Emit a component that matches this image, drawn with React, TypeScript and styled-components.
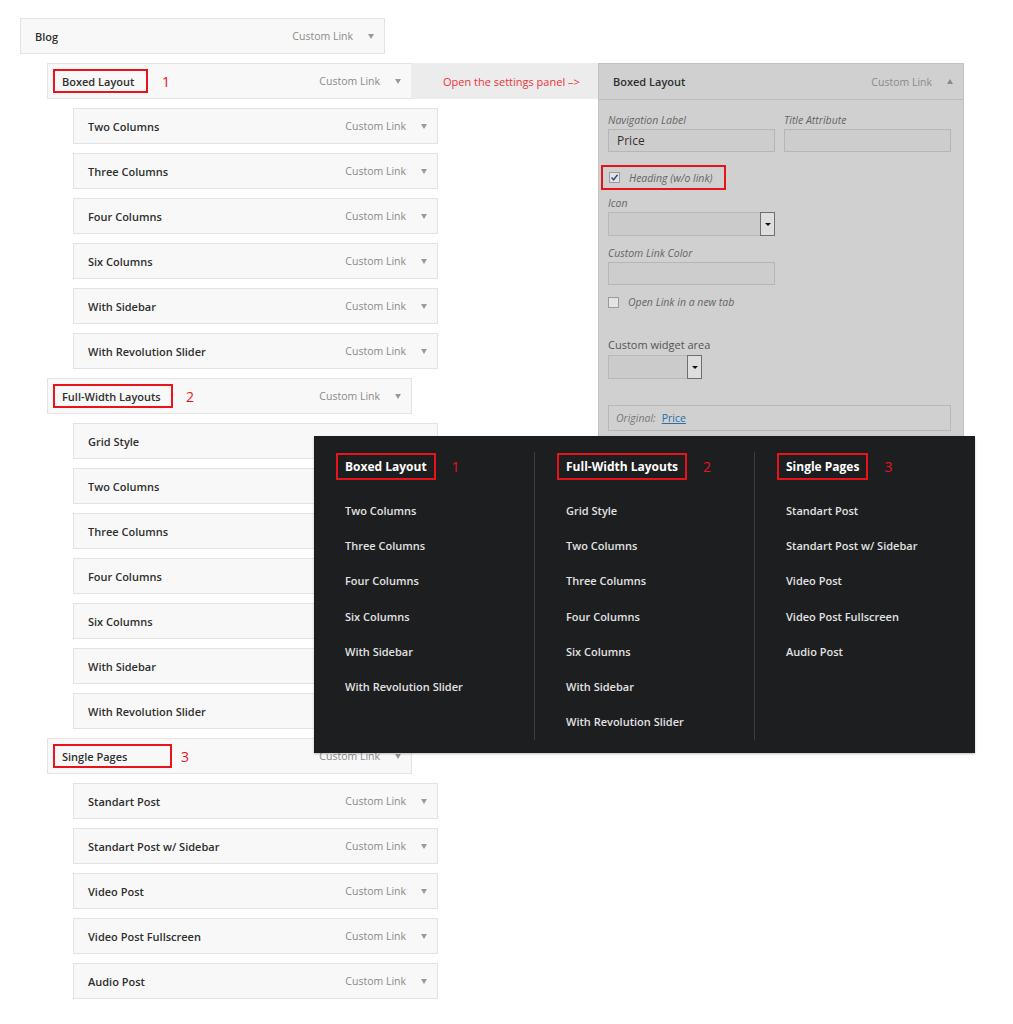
import React from 'react';
import styled, { createGlobalStyle } from 'styled-components';

type Item = {
  level: number;
  title: string;
  mark?: number;
  box?: number;
  markGap?: number;
  covered?: boolean;
};

const items: Item[] = [
  { level: 0, title: 'Blog' },
  { level: 1, title: 'Boxed Layout', mark: 1, box: 95, markGap: 14 },
  { level: 2, title: 'Two Columns' },
  { level: 2, title: 'Three Columns' },
  { level: 2, title: 'Four Columns' },
  { level: 2, title: 'Six Columns' },
  { level: 2, title: 'With Sidebar' },
  { level: 2, title: 'With Revolution Slider' },
  { level: 1, title: 'Full-Width Layouts', mark: 2, box: 120, markGap: 13 },
  { level: 2, title: 'Grid Style', covered: true },
  { level: 2, title: 'Two Columns', covered: true },
  { level: 2, title: 'Three Columns', covered: true },
  { level: 2, title: 'Four Columns', covered: true },
  { level: 2, title: 'Six Columns', covered: true },
  { level: 2, title: 'With Sidebar', covered: true },
  { level: 2, title: 'With Revolution Slider', covered: true },
  { level: 1, title: 'Single Pages', mark: 3, box: 119, markGap: 9 },
  { level: 2, title: 'Standart Post' },
  { level: 2, title: 'Standart Post w/ Sidebar' },
  { level: 2, title: 'Video Post' },
  { level: 2, title: 'Video Post Fullscreen' },
  { level: 2, title: 'Audio Post' },
];

const megaColumns = [
  {
    title: 'Boxed Layout',
    mark: 1,
    links: ['Two Columns', 'Three Columns', 'Four Columns', 'Six Columns', 'With Sidebar', 'With Revolution Slider'],
  },
  {
    title: 'Full-Width Layouts',
    mark: 2,
    links: ['Grid Style', 'Two Columns', 'Three Columns', 'Four Columns', 'Six Columns', 'With Sidebar', 'With Revolution Slider'],
  },
  {
    title: 'Single Pages',
    mark: 3,
    links: ['Standart Post', 'Standart Post w/ Sidebar', 'Video Post', 'Video Post Fullscreen', 'Audio Post'],
  },
];

const indent = [0, 27, 53];

const Check = () => (
  <svg width="9" height="9" viewBox="0 0 9 9">
    <path d="M1.5 4.6 L3.6 6.8 L7.6 1.8" fill="none" stroke="#3a4f8a" strokeWidth="1.5" />
  </svg>
);

const App = () => {
  return (
    <>
      <GlobalStyle />
      <Canvas>
        <MenuList>
          {items.map((item, i) => (
            <Row key={i} $indent={indent[item.level]}>
              {item.mark ? (
                <Marked>
                  <TitleBox $width={item.box}>{item.title}</TitleBox>
                  <Mark $gap={item.markGap}>{item.mark}</Mark>
                </Marked>
              ) : (
                <Title>{item.title}</Title>
              )}
              {!item.covered && (
                <>
                  <TypeLabel>Custom Link</TypeLabel>
                  <Arrow />
                </>
              )}
            </Row>
          ))}
        </MenuList>

        <Callout>
          <Hint>Open the settings panel –&gt;</Hint>
          <Panel>
            <PanelHead>
              <Title>Boxed Layout</Title>
              <TypeLabel>Custom Link</TypeLabel>
              <Arrow $up />
            </PanelHead>
            <PanelBody>
              <FieldPair>
                <Field>
                  <Label>Navigation Label</Label>
                  <Input>Price</Input>
                </Field>
                <Field>
                  <Label>Title Attribute</Label>
                  <Input />
                </Field>
              </FieldPair>
              <CheckRow $boxed>
                <CheckBox>
                  <Check />
                </CheckBox>
                <CheckText>Heading (w/o link)</CheckText>
              </CheckRow>
              <Field $top={1}>
                <Label>Icon</Label>
                <Select $width={167}>
                  <SelectButton>
                    <Caret />
                  </SelectButton>
                </Select>
              </Field>
              <Field $top={10}>
                <Label>Custom Link Color</Label>
                <Input />
              </Field>
              <CheckRow>
                <CheckBox />
                <CheckText>Open Link in a new tab</CheckText>
              </CheckRow>
              <Field $top={28}>
                <PlainLabel>Custom widget area</PlainLabel>
                <Select $width={94}>
                  <SelectButton>
                    <Caret />
                  </SelectButton>
                </Select>
              </Field>
              <Original>
                <em>Original:</em>
                <OriginalLink>Price</OriginalLink>
              </Original>
            </PanelBody>
          </Panel>
        </Callout>

        <Mega>
          {megaColumns.map((col, i) => (
            <MegaColumn key={i} $first={i === 0}>
              <MegaHead>
                <MegaTitle>{col.title}</MegaTitle>
                <MegaMark>{col.mark}</MegaMark>
              </MegaHead>
              <MegaLinks>
                {col.links.map((link, j) => (
                  <MegaLink key={j}>{link}</MegaLink>
                ))}
              </MegaLinks>
            </MegaColumn>
          ))}
        </Mega>
      </Canvas>
    </>
  );
};

export default App;

const GlobalStyle = createGlobalStyle`
  body {
    margin: 0;
    background: #ffffff;
    font-family: 'Open Sans', 'Liberation Sans', sans-serif;
  }
`;

const Canvas = styled.div`
  position: relative;
  width: 1013px;
  height: 1024px;
  box-sizing: border-box;
  padding: 18px 0 0 20px;
  overflow: hidden;
`;

const MenuList = styled.div`
  display: flex;
  flex-direction: column;
  gap: 9px;
`;

const Row = styled.div<{ $indent: number }>`
  width: 365px;
  height: 36px;
  box-sizing: border-box;
  margin-left: ${(p) => p.$indent}px;
  display: flex;
  align-items: center;
  padding: 0 10px 0 14px;
  background: #f8f8f8;
  border: 1px solid #e3e3e3;
`;

const Title = styled.span`
  flex: 1;
  font-size: 11px;
  font-weight: 600;
  color: #2f2f2f;
`;

const Marked = styled.div`
  flex: 1;
  display: flex;
  align-items: center;
`;

const TitleBox = styled.span<{ $width?: number }>`
  width: ${(p) => p.$width}px;
  height: 24px;
  box-sizing: border-box;
  margin-left: -9px;
  padding: 0 7px;
  display: flex;
  align-items: center;
  border: 2px solid #e8131b;
  font-size: 11px;
  font-weight: 600;
  color: #2f2f2f;
`;

const Mark = styled.span<{ $gap?: number }>`
  margin-left: ${(p) => p.$gap}px;
  font-size: 14px;
  color: #e8131b;
`;

const TypeLabel = styled.span`
  font-size: 10.5px;
  color: #8a8a8a;
  margin-right: 15px;
`;

const Arrow = styled.span<{ $up?: boolean }>`
  width: 0;
  height: 0;
  border-left: 3.5px solid transparent;
  border-right: 3.5px solid transparent;
  ${(p) => (p.$up ? 'border-bottom: 5px solid #8a8a8a;' : 'border-top: 5px solid #9a9a9a;')}
`;

const Callout = styled.div`
  position: absolute;
  left: 411px;
  top: 63px;
  display: flex;
  align-items: flex-start;
`;

const Hint = styled.div`
  width: 187px;
  height: 36px;
  box-sizing: border-box;
  padding-left: 32px;
  display: flex;
  align-items: center;
  background: #ececec;
  font-size: 11px;
  color: #f0333a;
`;

const Panel = styled.div`
  width: 366px;
  height: 380px;
  box-sizing: border-box;
  background: #d0d0d0;
  border: 1px solid #c2c2c2;
`;

const PanelHead = styled.div`
  height: 36px;
  box-sizing: border-box;
  display: flex;
  align-items: center;
  padding: 0 10px 0 14px;
  border-bottom: 1px solid #bcbcbc;
`;

const PanelBody = styled.div`
  display: flex;
  flex-direction: column;
  align-items: flex-start;
  padding: 13px 11px 0 9px;
`;

const FieldPair = styled.div`
  display: grid;
  grid-template-columns: 167px 167px;
  gap: 9px;
`;

const Field = styled.div<{ $top?: number }>`
  display: flex;
  flex-direction: column;
  margin-top: ${(p) => p.$top ?? 0}px;
`;

const Label = styled.span`
  height: 14px;
  line-height: 14px;
  margin-bottom: 2px;
  font-size: 10.5px;
  font-style: italic;
  color: #666;
`;

const PlainLabel = styled.span`
  height: 15px;
  line-height: 15px;
  margin-bottom: 3px;
  font-size: 11px;
  color: #555;
`;

const Input = styled.div`
  width: 167px;
  height: 23px;
  box-sizing: border-box;
  padding: 0 8px;
  display: flex;
  align-items: center;
  background: #cdcdcd;
  border: 1px solid #b6b6b6;
  font-size: 12px;
  color: #333;
`;

const Select = styled.div<{ $width: number }>`
  width: ${(p) => p.$width}px;
  height: 24px;
  box-sizing: border-box;
  display: flex;
  justify-content: flex-end;
  background: #cbcbcb;
  border: 1px solid #b8b8b8;
`;

const SelectButton = styled.div`
  width: 15px;
  height: 24px;
  box-sizing: border-box;
  margin: -1px -1px -1px 0;
  display: flex;
  align-items: center;
  justify-content: center;
  background: #dedede;
  border: 1px solid #6f6f6f;
`;

const Caret = styled.span`
  width: 0;
  height: 0;
  border-left: 3px solid transparent;
  border-right: 3px solid transparent;
  border-top: 3px solid #111;
`;

const CheckRow = styled.div<{ $boxed?: boolean }>`
  display: flex;
  align-items: center;
  gap: 9px;
  ${(p) =>
    p.$boxed
      ? `
    width: 125px;
    height: 25px;
    box-sizing: border-box;
    margin: 13px 0 5px -7px;
    padding-left: 6px;
    border: 2px solid #e8131b;
  `
      : `
    height: 14px;
    margin: 10px 0 0;
  `}
`;

const CheckBox = styled.span`
  width: 11px;
  height: 11px;
  box-sizing: border-box;
  display: flex;
  align-items: center;
  justify-content: center;
  background: #e4e4e4;
  border: 1px solid #9a9a9a;
`;

const CheckText = styled.span`
  font-size: 10.5px;
  font-style: italic;
  color: #666;
`;

const Original = styled.div`
  width: 343px;
  height: 26px;
  box-sizing: border-box;
  margin-top: 26px;
  padding-left: 7px;
  display: flex;
  align-items: center;
  gap: 6px;
  border: 1px solid #b8b8b8;
  font-size: 10.5px;
  color: #777;
`;

const OriginalLink = styled.span`
  color: #2a6fa8;
  text-decoration: underline;
`;

const Mega = styled.div`
  position: absolute;
  left: 314px;
  top: 436px;
  width: 661px;
  height: 317px;
  box-sizing: border-box;
  padding: 16px 0 13px;
  display: grid;
  grid-template-columns: 221px 220px 220px;
  background: #1d1e20;
  box-shadow: 0 1px 2px rgba(0, 0, 0, 0.25);
`;

const MegaColumn = styled.div<{ $first?: boolean }>`
  display: flex;
  flex-direction: column;
  padding-left: 22px;
  border-left: ${(p) => (p.$first ? 'none' : '1px solid #3b3c3f')};
  margin-left: ${(p) => (p.$first ? 0 : -1)}px;
`;

const MegaHead = styled.div`
  display: flex;
  align-items: center;
  margin-top: 1px;
`;

const MegaTitle = styled.span`
  height: 27px;
  box-sizing: border-box;
  padding: 0 7px;
  display: flex;
  align-items: center;
  border: 2px solid #e8131b;
  font-size: 12px;
  font-weight: 700;
  color: #ffffff;
`;

const MegaMark = styled.span`
  margin-left: 16px;
  font-size: 14px;
  color: #e8131b;
`;

const MegaLinks = styled.div`
  display: flex;
  flex-direction: column;
  margin-top: 13px;
  padding-left: 9px;
`;

const MegaLink = styled.span`
  height: 35.2px;
  display: flex;
  align-items: center;
  font-size: 11px;
  font-weight: 600;
  color: #e2e2e2;
`;
